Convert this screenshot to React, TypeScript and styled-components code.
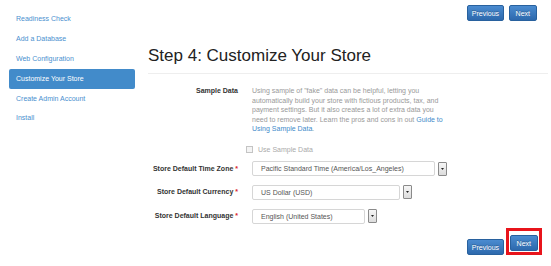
import styled, { createGlobalStyle } from 'styled-components';

const GlobalStyle = createGlobalStyle`
  html, body {
    margin: 0;
    padding: 0;
    background: #fff;
  }
  body {
    font-family: 'Liberation Sans', Arial, sans-serif;
    font-size: 7px;
    color: #333;
  }
`;

const Page = styled.div`
  display: flex;
  width: 551px;
  height: 266px;
  overflow: hidden;
`;

const Sidebar = styled.ul`
  list-style: none;
  margin: 0 0 0 9px;
  padding: 9.6px 0 0;
  width: 126px;
  flex-shrink: 0;
`;

const NavItem = styled.li<{ $active?: boolean }>`
  padding: 4.9px 7px;
  line-height: 10px;
  border-radius: 2px;
  color: ${({ $active }) => ($active ? '#fff' : '#4a90cf')};
  background: ${({ $active }) => ($active ? '#428bca' : 'transparent')};
`;

const Main = styled.div`
  flex: 1;
  margin: 0 3px 0 13px;
  display: flex;
  flex-direction: column;
`;

const ButtonBar = styled.div<{ $top?: boolean }>`
  display: flex;
  justify-content: flex-end;
  align-items: flex-end;
  gap: ${({ $top }) => ($top ? '5px' : '2px')};
  padding-right: ${({ $top }) => ($top ? '11px' : '6px')};
  margin-top: ${({ $top }) => ($top ? '5px' : '4px')};
`;

const Button = styled.button<{ $pad: number }>`
  font-family: 'Liberation Sans', Arial, sans-serif;
  font-size: 7px;
  line-height: 10px;
  height: 16px;
  padding: 3px ${({ $pad }) => $pad}px;
  color: #fff;
  text-shadow: 0 -1px 0 rgba(0, 0, 0, 0.25);
  background: linear-gradient(#4a8bd0, #2d69ad);
  border: 1px solid #28619e;
  border-radius: 2px;
  cursor: pointer;
`;

const Highlight = styled.span`
  display: inline-flex;
  border: 3px solid #e8141b;
  padding: 4px 1px 1px 1px;
`;

const Title = styled.h1`
  margin: 24.6px 0 0;
  font-size: 17px;
  line-height: 20px;
  font-weight: normal;
  color: #222;
  padding-bottom: 7px;
  border-bottom: 1px solid #eee;
`;

const Form = styled.div`
  display: flex;
  flex-direction: column;
  margin-top: 12.5px;
`;

const Row = styled.div<{ $gap?: number; $start?: boolean }>`
  display: flex;
  align-items: ${({ $start }) => ($start ? 'flex-start' : 'center')};
  gap: 14px;
  margin-top: ${({ $gap }) => $gap ?? 0}px;
`;

const Label = styled.div`
  width: 90px;
  flex-shrink: 0;
  text-align: right;
  font-weight: bold;
  line-height: 9.5px;
  white-space: nowrap;
  color: #333;
`;

const Required = styled.span`
  color: #d9262b;
`;

const Help = styled.p`
  margin: 0;
  width: 192px;
  line-height: 9.6px;
  color: #999;
`;

const Link = styled.a`
  color: #428bca;
  text-decoration: none;
`;

const CheckLabel = styled.label`
  display: flex;
  align-items: center;
  gap: 5px;
  margin-left: -6px;
  line-height: 9.5px;
  color: #aaa;
`;

const CheckBox = styled.span`
  width: 5px;
  height: 5px;
  border: 1px solid #c4c4c4;
  background: #f4f4f4;
`;

const SelectWrap = styled.div<{ $w: number }>`
  display: flex;
  align-items: center;
  gap: 3px;
  width: ${({ $w }) => $w}px;
  height: 15px;
`;

const SelectBox = styled.div`
  flex: 1;
  height: 15px;
  box-sizing: border-box;
  border: 1px solid #d6d6d6;
  border-radius: 2px;
  padding: 0 8px;
  line-height: 13px;
  color: #555;
  white-space: nowrap;
`;

const Arrow = styled.div`
  width: 9px;
  height: 14px;
  box-sizing: border-box;
  border: 1px solid #8a8a8a;
  border-radius: 1px;
  background: linear-gradient(#f6f6f6, #dcdcdc);
  display: flex;
  align-items: center;
  justify-content: center;
`;

const Select = ({ width, value }: { width: number; value: string }) => (
  <SelectWrap $w={width}>
    <SelectBox>{value}</SelectBox>
    <Arrow>
      <svg width='3' height='2' viewBox='0 0 3 2'>
        <path d='M0 0 H3 L1.5 2 Z' fill='#222' />
      </svg>
    </Arrow>
  </SelectWrap>
);

const navItems = [
  'Readiness Check',
  'Add a Database',
  'Web Configuration',
  'Customize Your Store',
  'Create Admin Account',
  'Install',
];

const selects = [
  { label: 'Store Default Time Zone', value: 'Pacific Standard Time (America/Los_Angeles)', width: 195, gap: 6.5 },
  { label: 'Store Default Currency', value: 'US Dollar (USD)', width: 160, gap: 8.5 },
  { label: 'Store Default Language', value: 'English (United States)', width: 125, gap: 9 },
];

const App = () => {
  return (
    <Page>
      <GlobalStyle />
      <Sidebar>
        {navItems.map((item) => (
          <NavItem key={item} $active={item === 'Customize Your Store'}>
            {item}
          </NavItem>
        ))}
      </Sidebar>
      <Main>
        <ButtonBar $top>
          <Button $pad={3.5}>Previous</Button>
          <Button $pad={6}>Next</Button>
        </ButtonBar>
        <Title>Step 4: Customize Your Store</Title>
        <Form>
          <Row $start>
            <Label>Sample Data</Label>
            <Help>
              Using sample of "fake" data can be helpful, letting you automatically build your
              store with fictious products, tax, and payment settings. But it also creates a lot
              of extra data you need to remove later. Learn the pros and cons in out{' '}
              <Link href='#'>Guide to Using Sample Data</Link>.
            </Help>
          </Row>
          <Row $gap={11}>
            <Label />
            <CheckLabel>
              <CheckBox />
              Use Sample Data
            </CheckLabel>
          </Row>
          {selects.map((s) => (
            <Row key={s.label} $gap={s.gap}>
              <Label>
                {s.label} <Required>*</Required>
              </Label>
              <Select width={s.width} value={s.value} />
            </Row>
          ))}
        </Form>
        <ButtonBar>
          <Button $pad={3.5}>Previous</Button>
          <Highlight>
            <Button $pad={6}>Next</Button>
          </Highlight>
        </ButtonBar>
      </Main>
    </Page>
  );
};

export default App;
